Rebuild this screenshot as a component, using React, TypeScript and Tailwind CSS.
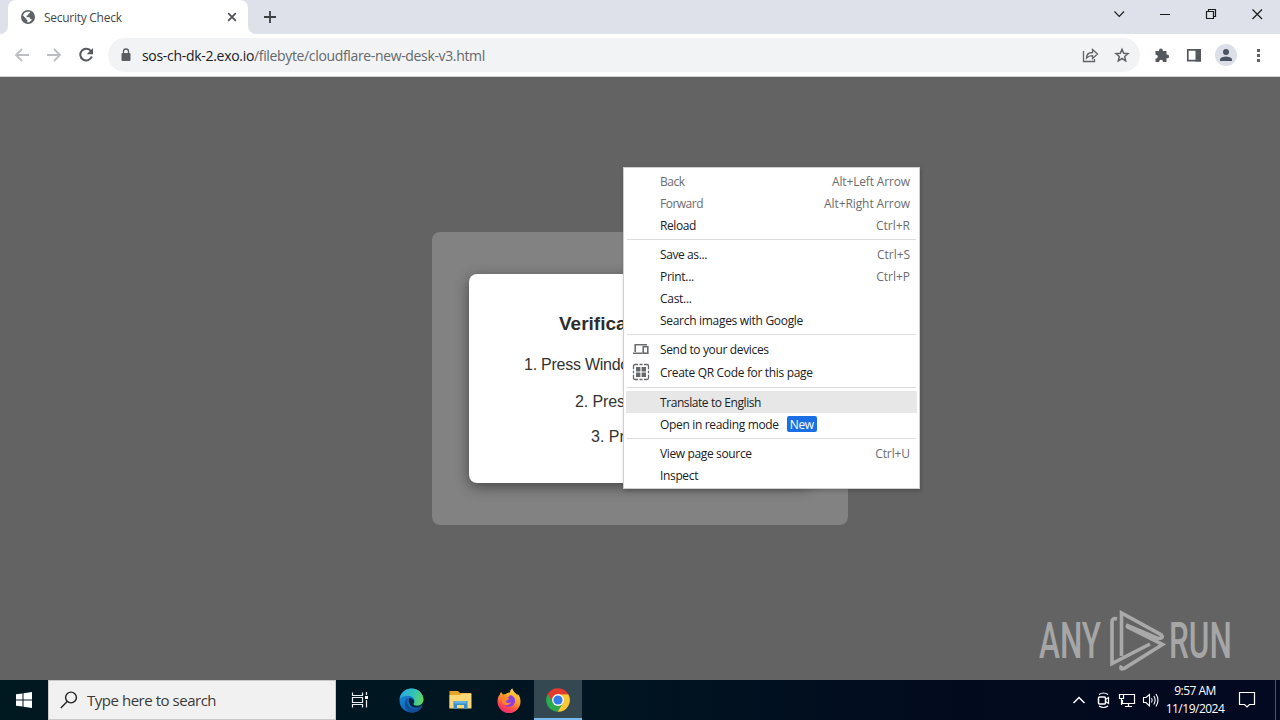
import React from "react";

const ui = "font-['Open_Sans','Noto_Sans',sans-serif]";

type Item = {
  label: string;
  ls: string;
  keys?: string;
  ks?: string;
  dim?: boolean;
  on?: boolean;
  badge?: boolean;
  icon?: React.ReactNode;
  tall?: boolean;
};

const devices = (
  <svg width="18" height="18" viewBox="0 0 18 18" fill="none" stroke="#6b6d70" strokeWidth="1.6">
    <path d="M3.200 12V4.700H15M1 13.200H10.500" />
    <rect x="11.200" y="6.700" width="4.600" height="6.500" />
  </svg>
);

const qr = (
  <svg width="18" height="18" viewBox="0 0 18 18" fill="none" stroke="#66686b" strokeWidth="1.3">
    <path d="M1.500 6.200V3Q1.500 1.500 3 1.500H6M7.500 1.500H10.500M12 1.500H15Q16.500 1.500 16.500 3V6.200M16.500 7.700V10.300M16.500 11.800V15Q16.500 16.500 15 16.500H12M10.500 16.500H7.500M6 16.500H3Q1.500 16.500 1.500 15V11.800M1.500 10.300V7.700" />
    <path d="M4 4h4.400v4.400H4zM9.600 4H14v4.400H9.600zM4 9.600h4.400V14H4zM9.600 9.600H14V14H9.600z" fill="#66686b" stroke="none" />
  </svg>
);

const groups: Item[][] = [
  [
    { label: "Back", ls: "tracking-[-0.5px]", keys: "Alt+Left Arrow", ks: "tracking-[-0.15px]", dim: true },
    { label: "Forward", ls: "tracking-[-0.5px]", keys: "Alt+Right Arrow", ks: "tracking-[-0.1px]", dim: true },
    { label: "Reload", ls: "tracking-[-0.4px]", keys: "Ctrl+R", ks: "tracking-[0px]" },
  ],
  [
    { label: "Save as...", ls: "tracking-[-0.4px]", keys: "Ctrl+S", ks: "tracking-[-0.05px]" },
    { label: "Print...", ls: "tracking-[-0.3px]", keys: "Ctrl+P", ks: "tracking-[0px]" },
    { label: "Cast...", ls: "tracking-[-0.3px]" },
    { label: "Search images with Google", ls: "tracking-[-0.3px]" },
  ],
  [
    { label: "Send to your devices", ls: "tracking-[-0.35px]", icon: devices },
    { label: "Create QR Code for this page", ls: "tracking-[-0.33px]", icon: qr, tall: true },
  ],
  [
    { label: "Translate to English", ls: "tracking-[-0.42px]", on: true },
    { label: "Open in reading mode", ls: "tracking-[-0.34px]", badge: true },
  ],
  [
    { label: "View page source", ls: "tracking-[-0.36px]", keys: "Ctrl+U", ks: "tracking-[-0.1px]" },
    { label: "Inspect", ls: "tracking-[-0.35px]" },
  ],
];

function ContextMenu() {
  return (
    <div className={`absolute left-[623px] top-[90px] w-[297px] border border-[#cfcfcf] bg-white p-[2px] text-[12px] leading-[20px] shadow-[1px_2px_4px_rgba(0,0,0,0.2)] ${ui}`}>
      {groups.map((g, i) => (
        <div key={i}>
          {i > 0 && (
            <div className="flex h-[7px] items-center px-px">
              <div className="h-px w-full bg-[#dcdcdc]" />
            </div>
          )}
          {g.map((m) => (
            <div key={m.label} className={`flex items-center whitespace-nowrap pr-[7px] ${m.tall ? "h-6" : "h-[22px]"} ${m.on ? "bg-[#e7e7e7]" : ""}`}>
              <div className="flex w-[34px] shrink-0 pl-[6px]">{m.icon}</div>
              <span className={`pt-[2px] ${m.ls} ${m.dim ? "text-[#6c6d70]" : "text-[#202124]"}`}>{m.label}</span>
              {m.badge && <span className="ml-2 flex h-4 w-[30px] items-center justify-center rounded-[2px] bg-[#1a6fe4] pt-px tracking-[-0.4px] text-white">New</span>}
              {m.keys && <span className={`ml-auto pt-[2px] text-[#6c6d70] ${m.ks}`}>{m.keys}</span>}
            </div>
          ))}
        </div>
      ))}
    </div>
  );
}

function TabStrip() {
  return (
    <div className="flex h-[34px] bg-[#dee1e9]">
      <div className="flex w-2 items-end bg-white">
        <div className="h-full w-full rounded-br-[8px] bg-[#dee1e9]" />
      </div>
      <div className="flex w-[240px] items-center rounded-t-[8px] bg-white pl-[13px] pr-[10px]">
        <svg width="14" height="14" viewBox="0 0 14 14">
          <circle cx="7" cy="7" r="7" fill="#5f6368" />
          <path d="M2 5.500C2.500 3.500 4 2 6 1.700L9.200 1.800C9.200 3 8.800 3.500 7.500 3.800L7 5.300 5.500 5.800V7L8.500 7.300 9.200 9 11 9.500C9.800 11.500 8 12.300 6.300 12.300L6.300 10.300 4.500 9.300Z" fill="#fff" />
          <path d="M2 5.700L5 8.500 5.600 10.300 6 12.200C3 11.800 1 9 2 5.700Z" fill="#5f6368" />
        </svg>
        <span className={`ml-[9px] whitespace-nowrap pt-px text-[12px] tracking-[-0.27px] text-[#45474a] ${ui}`}>Security Check</span>
        <svg className="ml-auto" width="12" height="12" viewBox="0 0 12 12" stroke="#505357" strokeWidth="1.8">
          <path d="M2.200 2.200L9.800 9.800M9.800 2.200L2.200 9.800" />
        </svg>
      </div>
      <div className="w-2 bg-white">
        <div className="h-full w-full rounded-bl-[8px] bg-[#dee1e9]" />
      </div>
      <svg className="ml-[7px] mt-[10px]" width="14" height="14" viewBox="0 0 14 14" stroke="#3c4043" strokeWidth="1.8">
        <path d="M7 1V13M1 7H13" />
      </svg>
      <svg className="ml-auto" width="180" height="34" viewBox="1100 0 180 34" fill="none" stroke="#1b1b1b" strokeWidth="1">
        <path d="M1114.500 11.500L1119.200 16.500 1124 11.500M1160 14.500H1170" strokeWidth="1.100" />
        <path d="M1206.500 11.500H1213.500V18.500H1206.500ZM1208.500 11V9.500H1215.500V16.500H1214" strokeWidth="1.200" />
        <path d="M1252.500 9.500L1262 19M1262 9.500L1252.500 19" strokeWidth="1.200" />
      </svg>
    </div>
  );
}

function Toolbar() {
  return (
    <div className="flex h-[43px] items-center border-b border-[#d5d5d6] bg-white">
      <svg width="108" height="42" viewBox="0 34 108 42" fill="none" strokeWidth="1.800">
        <path d="M29 55H16M22 49L16 55 22 61M47 55H60M54 49L60 55 54 61" stroke="#bcbec1" />
        <path d="M91 51.200A5.900 5.900 0 1 0 91.800 56.500" stroke="#55595e" strokeWidth="2" />
        <path d="M93 48V54.300H86.700Z" fill="#55595e" />
      </svg>
      <div className="flex h-[34px] w-[1032px] items-center rounded-full bg-[#f1f3f4] pl-[13px]">
        <svg width="10" height="14" viewBox="0 0 10 14">
          <rect x="0.500" y="5" width="9" height="8" rx="1" fill="#5a5d61" />
          <path d="M2.500 5.500V3.500a2.500 2.500 0 0 1 5 0V5.500" fill="none" stroke="#5a5d61" strokeWidth="1.300" />
        </svg>
        <span className={`ml-[11px] whitespace-nowrap text-[14px] text-[#65686c] ${ui}`}>
          <span className="tracking-[-0.3px] text-[#202124]">sos-ch-dk-2.exo.io</span>
          <span className="tracking-[-0.35px]">/filebyte/cloudflare-new-desk-v3.html</span>
        </span>
      </div>
      <svg className="-ml-[60px]" width="200" height="42" viewBox="1080 34 200 42" fill="none" stroke="#5f6368" strokeWidth="1.300">
        <path d="M1083.500 51V61.500H1094.500V59M1086.500 58C1086.500 54 1089 52.500 1092.500 52.500V49.500L1097.500 54 1092.500 58.500V55.700C1089.500 55.700 1088 56.200 1086.500 58Z" />
        <path d="M1122 49.300L1123.700 53.300 1128 53.700 1124.700 56.500 1125.700 60.800 1122 58.500 1118.300 60.800 1119.300 56.500 1116 53.700 1120.300 53.300Z" strokeWidth="1.500" />
        <path d="M1155.500 51H1159V50.300a1.900 1.900 0 0 1 3.800 0V51H1166.500V54.500H1167.200a1.900 1.900 0 0 1 0 3.800H1166.500V62H1163C1163 59 1159.200 59 1159.200 62H1155.500V58.500C1158.500 58.500 1158.500 54.700 1155.500 54.700Z" fill="#55595d" stroke="none" />
        <path d="M1187.800 49.800H1200.200V60.700H1187.800Z" stroke="#55595d" strokeWidth="1.700" />
        <rect x="1195.500" y="49" width="5.500" height="12.500" fill="#55595d" stroke="none" />
        <circle cx="1226" cy="55" r="11" fill="#dcdfe8" stroke="none" />
        <circle cx="1226" cy="52" r="3" fill="#4c5361" stroke="none" />
        <path d="M1220 61V59.500Q1220 57 1226 56.500Q1232 57 1232 59.500V61Z" fill="#4c5361" stroke="none" />
        <path d="M1257 49h3v3h-3zM1257 54h3v3h-3zM1257 59h3v3h-3z" fill="#5f6368" stroke="none" />
      </svg>
    </div>
  );
}

function Dialog() {
  return (
    <div className="mt-[155px] h-[293px] w-[416px] rounded-[8px] bg-[#828282] px-[37px] pt-[42px]">
      <div className="h-[209px] w-[342px] overflow-visible whitespace-nowrap rounded-[8px] bg-white pt-[39px] font-['Liberation_Sans',Arial,sans-serif] text-[16px] leading-[22px] text-[#333] shadow-[0_4px_14px_rgba(0,0,0,0.45)]">
        <h3 className="pl-[90px] text-[19px] font-bold text-[#2d2d2d]">Verification</h3>
        <p className="mt-[19px] pl-[55px] tracking-[-0.25px]">1. Press Windows</p>
        <p className="mt-[15px] pl-[106px] tracking-[-0.1px]">2. Press</p>
        <p className="mt-[13px] pl-[122px]">3. Press</p>
      </div>
    </div>
  );
}

function Watermark() {
  return (
    <div className="absolute bottom-2 left-[1039px] flex h-[62px] items-center font-['Roboto',sans-serif] text-[50px] font-medium leading-none text-[#a6a6a6]">
      <span className="flex w-[65px]"><span className="origin-left scale-x-[0.63]">ANY</span></span>
      <svg className="ml-[5px] shrink-0" width="58" height="62" viewBox="1109 609 58 62" fill="none" stroke="#a9a9a9" strokeWidth="3.600">
        <path d="M1121.500 655V612L1161.500 634Q1164 637.500 1158 637.500L1126 624" />
        <path d="M1117 618Q1112 616.500 1112 621V662.500L1150 643" />
        <path d="M1126.500 625.500L1162.500 643.500 1124 667.500Q1119.500 669 1121.500 664.500" />
      </svg>
      <span className="ml-[2px] flex w-[63px]"><span className="origin-left scale-x-[0.63]">RUN</span></span>
    </div>
  );
}

function Taskbar() {
  return (
    <div className="flex h-10 bg-[linear-gradient(90deg,#001820_0%,#001521_45%,#020b1e_75%,#030920_100%)] text-white">
      <div className="flex w-12 items-center justify-center">
        <svg width="16" height="16" viewBox="0 0 16 16" fill="#fff">
          <path d="M0 2.300L6.500 1.400V7.500H0ZM7.500 1.200L16 0V7.500H7.500ZM0 8.500H6.500V14.600L0 13.700ZM7.500 8.500H16V16L7.500 14.800Z" />
        </svg>
      </div>
      <div className="flex w-[288px] items-center border border-[#c9c9c9] bg-[#f1f1f1] pl-[11px]">
        <svg width="18" height="18" viewBox="0 0 18 18" fill="none" stroke="#222" strokeWidth="1.400">
          <circle cx="11" cy="6.500" r="5.400" />
          <path d="M7.200 10.500L0.800 17" />
        </svg>
        <span className={`ml-[9px] whitespace-nowrap text-[15px] tracking-[-0.47px] text-[#3a3a3a] ${ui}`}>Type here to search</span>
      </div>
      <div className="flex w-12 items-center justify-center">
        <svg width="18" height="18" viewBox="0 0 18 18" fill="none" stroke="#e8eef0" strokeWidth="1.200">
          <path d="M1.500 1.500V4.500H11.500V1.500M1.500 16.500V13.500H11.500V16.500M1.500 6.500H11.500V11.500H1.500ZM15.500 1V4M15.500 9V16.500" />
          <rect x="14" y="5" width="3" height="3" fill="#fff" stroke="none" />
        </svg>
      </div>
      <div className="flex w-[54px] items-center justify-center">
        <svg width="25" height="25" viewBox="0 0 24 24">
          <defs>
            <linearGradient id="eg" x1="0" y1="0.300" x2="1" y2="0.500"><stop offset="0" stopColor="#2aa5e0" /><stop offset="0.600" stopColor="#35c5b5" /><stop offset="1" stopColor="#62d85a" /></linearGradient>
            <linearGradient id="eb" x1="0" y1="0" x2="0.500" y2="1"><stop offset="0" stopColor="#1b8edc" /><stop offset="1" stopColor="#1160b5" /></linearGradient>
          </defs>
          <path d="M0.500 12C0.500 5 6 0.500 12 0.500C19 0.500 23.500 6 23.500 11C23.500 14 21 16 22.500 17C20.500 21 17 23.500 12 23.500C5.500 23.500 0.500 18.500 0.500 12Z" fill="url(#eb)" />
          <path d="M0.600 11C1.500 4.500 6 0.500 12 0.500C19 0.500 23.500 6 23.500 11C23.500 15 20.500 17 17.500 17C14.500 17 13 15.700 14.500 13.800C16 11.500 13.500 7.500 8.500 7.500C4.500 7.500 1.500 9 0.600 11Z" fill="url(#eg)" />
          <path d="M9.500 9C6.500 12 8 20 15.500 20C18.500 20 21 18.500 22.500 16.500C21 21 17 23.500 12.500 23.500C8 23 5.500 19.500 5.500 15.500C5.500 12.500 7 10 9.500 9Z" fill="#124f96" />
          <path d="M10 9.500C8.500 11.500 9 17.500 15 18.700C19 19.300 22 17.500 23 15L23.300 13C22 16 20 17 17.500 17C14.500 17 13 15.700 14.500 13.800C15 11.500 12.500 9.500 10 9.500Z" fill="#06263b" />
        </svg>
      </div>
      <div className="flex w-[44px] items-center justify-center">
        <svg width="23" height="20" viewBox="0 0 23 20">
          <path d="M0.500 1H9L11 3H22V18H0.500Z" fill="#e5a52c" />
          <path d="M0.500 5H11L12.500 3.500H22.500V18.500H0.500Z" fill="#fbd775" />
          <path d="M4.500 11H18.500V19H15V15H8V19H4.500Z" fill="#368fce" />
          <path d="M5.500 11H17.500V13.500H5.500Z" fill="#61b3e4" />
        </svg>
      </div>
      <div className="flex w-[52px] items-center justify-center pl-[2px]">
        <svg width="24" height="25" viewBox="0 0 24 25">
          <defs><linearGradient id="ff" x1="0.800" y1="0" x2="0.300" y2="1"><stop offset="0" stopColor="#ffe34d" /><stop offset="0.450" stopColor="#ff9a25" /><stop offset="0.800" stopColor="#ff4050" /><stop offset="1" stopColor="#e62b7a" /></linearGradient></defs>
          <path d="M4 4L6 6.500 9 6C10 5 11.500 4.500 13 4.500C13 2.500 14 1 15.500 0.500C16 4 19 5 20.500 7.500L20.500 5.500C22.500 7.500 23.500 10.500 23.500 13.500A11.500 11.500 0 0 1 0.500 13.500C0.500 10 1.500 8 2.500 7Z" fill="url(#ff)" />
          <path d="M7.500 10L11 9.500 13.500 7C17 8 18.500 11 18 14C17 18.500 12 20 8.500 18C6 16.500 5.500 13.500 6.500 11.500Z" fill="#8b3fe0" />
          <path d="M4 8.500C6 7.500 9 8 12 10.500C12 12 9.500 12 9 13.500C9.500 15.500 12 15 14 14.500C12 18 7.500 18 5.500 15Z" fill="#ff872b" />
        </svg>
      </div>
      <div className="flex w-12 items-center justify-center border-b-2 border-[#76b9ed] bg-[#344851] pt-[2px]">
        <svg width="24" height="24" viewBox="0 0 24 24">
          <path d="M12 12L1.800 6A11.800 11.800 0 0 1 22.300 6.200Z" fill="#e33b2e" />
          <path d="M12 12L1.800 6A11.800 11.800 0 0 0 11.500 23.800L17 15Z" fill="#2da94f" />
          <path d="M12 12L12 6.200H22.300A11.800 11.800 0 0 1 11.500 23.800L17 15Z" fill="#fcc934" />
          <path d="M12 6.200H22.300L20 4H4L1.800 6 7 14.800A5.800 5.800 0 0 1 12 6.200" fill="#e33b2e" />
          <circle cx="12" cy="12" r="5.900" fill="#fff" />
          <circle cx="12" cy="12" r="4.600" fill="#347ce8" />
        </svg>
      </div>
      <svg className="ml-auto" width="98" height="40" viewBox="1065 680 98 40" fill="none" stroke="#fff" strokeWidth="1.200">
        <path d="M1073.500 703L1079 697.500 1084.500 703" strokeWidth="1.500" />
        <path d="M1099 694.500Q1103.500 691.500 1108 694.500M1099 706Q1103.500 709 1108 706" />
        <rect x="1098.500" y="697" width="7" height="7" rx="1" strokeWidth="1.500" />
        <path d="M1105.500 699.500L1108.500 697.500V703.500L1105.500 701.500" />
        <path d="M1124 694.500H1134.500V703.500H1122.500V700M1119.500 694.500H1123.500V698.500H1119.500ZM1121.500 698.500V705M1128.500 703.500V706.500M1125 706.500H1132" />
        <path d="M1143.500 697.500H1146L1149.500 694.500V706L1146 702.500H1143.500ZM1151.500 698Q1153 700 1151.500 702.500M1153.800 696Q1156.500 700 1153.800 704.500M1156 694Q1160 700 1156 706.500" strokeWidth="1.100" />
      </svg>
      <div className={`flex w-[64px] flex-col items-center pt-[2px] text-[12px] leading-[18px] tracking-[-0.5px] ${ui}`}>
        <span>9:57 AM</span>
        <span className="whitespace-nowrap">11/19/2024</span>
      </div>
      <svg width="34" height="40" viewBox="1227 680 34 40" fill="none" stroke="#fff" strokeWidth="1.200">
        <path d="M1239.500 692.500H1254.500V704.500H1249.500L1247 707 1244.500 704.500H1239.500Z" />
      </svg>
      <div className="ml-[14px] w-[5px] border-l border-[#4d5564]" />
    </div>
  );
}

export default function App() {
  return (
    <div className="flex h-[720px] w-[1280px] flex-col overflow-hidden">
      <TabStrip />
      <Toolbar />
      <main className="relative flex h-[603px] justify-center bg-[#636363]">
        <Dialog />
        <ContextMenu />
        <Watermark />
      </main>
      <Taskbar />
    </div>
  );
}
